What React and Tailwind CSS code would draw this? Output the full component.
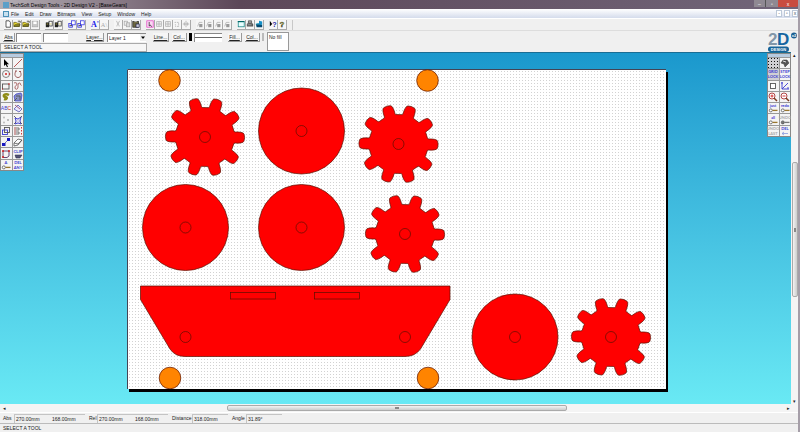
import React, { useState } from 'react';

const INK = '#222';
const BLUE = '#3a3ad0';
const RED = '#d02020';
const GREY = '#a8a8a8';

const menus = ['File', 'Edit', 'Draw', 'Bitmaps', 'View', 'Setup', 'Window', 'Help'];

// Every glyph is drawn in a 10x10 box
const glyphs = {
  page: <path d="M2.5 1h4l1.5 2v6h-5.500z" fill="#fff" stroke={INK} />,
  open: (
    <>
      <path d="M1 8V3h3l1 1h3v4z" fill="#f0e030" stroke="#665c10" />
      <path d="M3 5.500h6L8 8H1z" fill="#8a8420" stroke="#222" strokeWidth=".5" />
      <path d="M6 1.500h3v2" fill="none" stroke={INK} />
    </>
  ),
  save: (
    <>
      <rect x="1.500" y="1.500" width="7" height="7" fill="#c8c8c8" stroke={GREY} />
      <rect x="3" y="2" width="4" height="3" fill="#fff" />
    </>
  ),
  binder: (
    <>
      <rect x="1" y="3" width="4" height="6" fill="#222" />
      <rect x="5" y="1.500" width="4" height="6" fill="#fff" stroke="#222" />
      <path d="M2 5h2M6 5h2" stroke="#d0c040" />
    </>
  ),
  blueDocs: (
    <>
      <rect x="1" y="4.500" width="4.500" height="4.500" fill="#dde" stroke="#2525e0" />
      <rect x="4.500" y="1" width="4.500" height="5" fill="#fff" stroke="#2525e0" />
      <path d="M2 7h3" stroke={INK} />
    </>
  ),
  cut: <path d="M3 1l3 6M7 1L4 7M3 7.500h1M6 7.500h1" fill="none" stroke={GREY} />,
  copy: (
    <>
      <rect x="1.500" y="1.500" width="4" height="5" fill="#eee" stroke={GREY} />
      <rect x="4.500" y="3.500" width="4" height="5" fill="#ddd" stroke={GREY} />
    </>
  ),
  paste: (
    <>
      <rect x="1" y="2" width="7" height="7" fill="#6d6840" stroke={INK} />
      <rect x="5" y="5" width="4" height="4" fill="#ccd" stroke="#224" />
      <path d="M3 2h3" stroke="#ddd" />
    </>
  ),
  select: (
    <>
      <rect x="1" y="1" width="8" height="8" fill="#fbd9f5" stroke="#e040c0" />
      <path d="M4 2.500v5l1.500-1.200L7 8.500" fill="none" stroke={INK} />
    </>
  ),
  grid: <path d="M2 2h6v6H2zM2 5h6M5 2v6" fill="none" stroke={GREY} />,
  rotate: <path d="M2 3h5v5M7 8H3V5" fill="none" stroke={GREY} strokeDasharray="2 1" />,
  move: <path d="M5 1v8M1 5h8M3 3v4M7 3v4" fill="none" stroke={GREY} />,
  order: (
    <>
      <path d="M2 8l2-5h4" fill="none" stroke={GREY} />
      <rect x="4" y="5" width="4" height="4" fill="#999" />
    </>
  ),
  screen: (
    <>
      <rect x="1.500" y="2" width="7.500" height="6.500" fill="#e8ffff" stroke="#0b7c7c" />
      <path d="M1 2h8" stroke="#066" strokeWidth="1.500" />
    </>
  ),
  print: (
    <>
      <path d="M3 1h4v3H3z" fill="#aaa" stroke="#444" />
      <path d="M2 4h6l1 1v3H1V5z" fill="#555" />
      <path d="M2 6h5" stroke="#bbb" />
    </>
  ),
  machine: (
    <>
      <path d="M1 5l3-1 5 2v3H2z" fill="#064a70" />
      <path d="M5 1l4 1v4H5z" fill="#1590c8" />
      <path d="M1 5h4" stroke="#36c8e8" />
    </>
  ),
  pointer: <path d="M3 1v7l1.700-1.600L6 9.300l1-.5-1.200-2.600H8z" fill="#000" />,
  line: <path d="M1 9L9 1" stroke="#b04848" />,
  circle: (
    <>
      <circle cx="5" cy="5" r="3.500" fill="none" stroke="#777" />
      <circle cx="5" cy="5" r="1" fill={RED} />
      <circle cx="8.500" cy="5" r=".8" fill={RED} />
    </>
  ),
  arc: <path d="M3 2C1 5 2 8.500 5 8.500s4-3.500 2-6M2 2h2M6 2.500h2" fill="none" stroke="#965050" />,
  rect: (
    <>
      <rect x="1.500" y="3" width="6.500" height="5" fill="none" stroke="#555" />
      <path d="M7 3h2M1 8h1" stroke={RED} />
    </>
  ),
  curve: <path d="M1 2c1-.5 3-.5 3 1S1.500 5 2 7s3 1.500 3-1 0-4 1.500-4S7 4 8.500 4.500" fill="none" stroke="#a05555" />,
  path: <path d="M8 3C4 1 1 4 4 5c3 0 2 3-1 2" fill="none" stroke="#8f8c18" strokeWidth="2.500" />,
  fill: (
    <>
      <path d="M1 4l2-2 5-1 1 2-1 6-6 0z" fill="#8890c0" stroke={BLUE} strokeWidth=".7" />
      <path d="M3 4h4v4M1 9l3-3" fill="none" stroke="#555" />
    </>
  ),
  dimension: (
    <>
      <path d="M1 6l4-4 4 4-3 3z" fill="#e8e8ff" stroke="#6666b8" />
      <path d="M2 2l5 4" stroke="#a05070" />
    </>
  ),
  points: (
    <>
      <circle cx="3" cy="2.500" r="1" fill="#bbb" />
      <circle cx="7" cy="5" r="1" fill="#aaa" />
      <circle cx="3" cy="7.500" r="1" fill="#bbb" />
    </>
  ),
  edit: (
    <>
      <path d="M2 3l3 1 3-2-1 4 1 3-3-1-3 1 1-3z" fill="#dde" stroke={BLUE} />
      <path d="M1 1l2 2M9 1L7 3M1 9l2-2M9 9L7 7" stroke="#556" />
    </>
  ),
  scale: (
    <>
      <rect x="1.500" y="4" width="5" height="4.500" fill="none" stroke={BLUE} />
      <rect x="3.500" y="1.500" width="5" height="5" fill="none" stroke="#555" />
    </>
  ),
  align: (
    <>
      <path d="M2 1v8" stroke="#a04040" />
      <path d="M3 2h3v2H3M3 6h3v2H3" fill="none" stroke="#666" />
      <path d="M8.500 1v8" stroke={RED} strokeDasharray="1.500 1.500" />
    </>
  ),
  attach: (
    <>
      <rect x="6" y="1" width="3" height="3" fill="#1717c0" />
      <rect x="1" y="6" width="3.500" height="3" fill="#1717c0" />
      <path d="M4 6l2-2" stroke="#66a" />
    </>
  ),
  erase: <path d="M1 6l4-4 4 1-4 5-4 1zM1 6l4 1 4-4" fill="#fff" stroke="#555" strokeWidth=".8" />,
  shape: (
    <>
      <path d="M2 2h6v5L6 8.500H2z" fill="none" stroke="#553366" />
      <path d="M1 2h2M7 2h2M1 8h2" stroke={RED} strokeWidth="1.500" />
    </>
  ),
  clip: (
    <>
      <text x="5" y="4" textAnchor="middle" fontSize="4" fontWeight="bold" fill={BLUE}>CLIP</text>
      <path d="M2 6h7L7 9H3z" fill="#557" stroke="#224" strokeWidth=".5" />
    </>
  ),
  dots: (
    <g fill="#111">
      {[0, 3, 6, 9].map((y) =>
        [0, 3, 6, 9].map((x) => <rect key={`${x}-${y}`} x={x} y={y} width="1" height="1" shapeRendering="crispEdges" />)
      )}
    </g>
  ),
  lock: (
    <>
      <path d="M1 5l2-3h4l2 3-4 4-1-3z" fill="#555" stroke="#333" strokeWidth=".5" />
      <path d="M3 3l3 1" stroke="#eee" />
    </>
  ),
  square: <rect x="2.500" y="2.500" width="5" height="5" fill="#fff" stroke="#555" />,
  axes: (
    <>
      <path d="M2 1v7h7M2 8l6-6" fill="none" stroke={BLUE} />
      <path d="M1 2h2M7 7h2" stroke={BLUE} />
    </>
  ),
};

function zoomGlass(plus) {
  return (
    <>
      <circle cx="4" cy="4" r="3" fill="#fff" stroke="#a83232" />
      <path d="M6 6l3 3" stroke="#7a3a20" strokeWidth="1.500" />
      <path d={plus ? 'M2.500 4h3M4 2.500v3' : 'M2.500 4h3'} stroke={RED} />
    </>
  );
}
glyphs.zoomIn = zoomGlass(true);
glyphs.zoomOut = zoomGlass(false);

function words(top, bottom, color = BLUE) {
  return (
    <g fontSize="4" fontWeight="bold" fontFamily="Lato, sans-serif" fill={color} textAnchor="middle">
      <text x="5" y="4">{top}</text>
      {bottom && <text x="5" y="9">{bottom}</text>}
    </g>
  );
}

function keyed(label, color = BLUE, blob = '#fff') {
  return (
    <>
      {words(label, null, color)}
      <circle cx="2.800" cy="7.400" r="1.500" fill={blob} stroke="#555" strokeWidth=".8" />
      <path d="M4.500 7.400h5" stroke={blob === '#fff' ? '#9a762e' : '#777'} strokeWidth="1.300" />
    </>
  );
}

glyphs.abc = (
  <text x="5" y="7" textAnchor="middle" fontSize="5" fill={BLUE}>
    AB<tspan fill={RED}>C</tspan>
  </text>
);
glyphs.textA = (
  <text x="0" y="9" fontSize="10" fontWeight="bold" fontFamily="Liberation Serif, serif" fill="#1616e8">
    A<tspan fontSize="5" dy="-4">*</tspan>
  </text>
);
glyphs.textGrey = <text x="1" y="9" fontSize="8" fontFamily="Liberation Serif, serif" fill={GREY}>A\</text>;
glyphs.whatsThis = (
  <>
    <path d="M1 1v7l3-3z" fill="#000" />
    <text x="4" y="9" fontSize="9" fontWeight="bold" fill="#2222a0">?</text>
  </>
);
glyphs.help = (
  <text x="2" y="9" fontSize="10" fontWeight="bold" fill="#a8a810" stroke="#333" strokeWidth=".4">?</text>
);
glyphs.gridLock = words('GRID', 'LOCK');
glyphs.stepLock = words('STEP', 'LOCK');
glyphs.delAny = words('DEL', 'ANY');
glyphs.undoLast = words('UNDO', 'LAST', GREY);
glyphs.all = keyed('all');
glyphs.just = keyed('just');
glyphs.redo = keyed('redo');
glyphs.undo = keyed('UNDO', GREY, '#777');
glyphs.del = (
  <>
    {words('DEL')}
    <path d="M2 7.500h6M4 6L2 7.500 4 9" fill="none" stroke="#8899dd" strokeWidth=".8" />
  </>
);
glyphs.attr = keyed('A');

function Glyph({ name, className = 'size-2.5' }) {
  return (
    <svg
      viewBox="0 0 10 10"
      className={`shrink-0 overflow-visible ${className}`}
      strokeWidth="0.9"
      fontFamily="Liberation Sans, sans-serif"
      aria-hidden="true"
    >
      {glyphs[name]}
    </svg>
  );
}

const toolbar = [
  ['page', 'open', 'open', 'save'],
  ['binder', 'binder'],
  ['blueDocs', 'blueDocs'],
  ['textA', 'textGrey'],
  ['cut', 'copy', 'paste'],
  ['select', 'grid', 'grid', 'rotate', 'move'],
  ['order', 'order', 'order', 'order'],
  ['screen', 'print', 'machine'],
  ['whatsThis', 'help'],
];

const drawTools = [
  'pointer', 'line', 'circle', 'arc', 'rect', 'curve', 'path', 'fill', 'abc', 'dimension',
  'points', 'edit', 'scale', 'align', 'attach', 'erase', 'shape', 'clip', 'attr', 'delAny',
];

const viewTools = [
  'dots', 'lock', 'gridLock', 'stepLock', 'square', 'axes', 'zoomIn', 'zoomOut',
  'just', 'redo', 'all', 'undo', 'undoLast', 'del',
];

function ToolPalette({ tools, active, onPick, className, gridClass }) {
  return (
    <div className={`absolute w-6 border border-[#888] bg-[#999] ${className}`}>
      <div className="mb-px h-[3px] bg-[#b7cbe0]" />
      <div className={`grid grid-cols-2 gap-px ${gridClass}`}>
        {tools.map((name) => (
          <button
            key={name}
            type="button"
            aria-label={name}
            onClick={() => onPick(name)}
            className={`flex items-center justify-center ${active.includes(name) ? 'bg-[#d0d0d4]' : 'bg-[#f4f4f4]'}`}
          >
            <Glyph name={name} />
          </button>
        ))}
      </div>
    </div>
  );
}

// Outline of a ten tooth gear centred on the origin
function gearPath() {
  const profile = [
    [29.6, -11.5], [30.8, -10.4], [33.5, -9.6], [36.2, -8.4], [38.4, -6.8], [39.2, -5],
    [39.6, 0], [39.2, 5], [38.4, 6.8], [36.2, 8.4], [33.5, 9.6], [30.8, 10.4], [29.6, 11.5],
  ];
  const pts = [];
  for (let tooth = 0; tooth < 10; tooth++) {
    profile.forEach(([r, deg]) => {
      const a = ((tooth * 36 + deg) * Math.PI) / 180;
      pts.push(`${(r * Math.cos(a)).toFixed(2)} ${(r * Math.sin(a)).toFixed(2)}`);
    });
  }
  return `M${pts.join('L')}Z`;
}

const gear = gearPath();
const gears = [[78, 68], [271.5, 75], [278, 165], [484, 268]];
const discs = [[174.5, 62], [58.5, 158.5], [174.5, 158.5], [388, 268]];
const pins = [[42.5, 11.5], [300.5, 11.5], [43, 309], [301, 309]];

function Drawing() {
  return (
    <svg
      viewBox="0 0 539 320"
      className="h-80 w-[539px] shrink-0 bg-white shadow-[2px_3px_0_#000]"
      role="img"
      aria-label="Base and gears"
    >
      <defs>
        <pattern id="dots" width="3" height="3" patternUnits="userSpaceOnUse">
          <rect x="2" y="2" width="1" height="1" fill="#d2d2d2" />
        </pattern>
      </defs>
      <rect width="539" height="320" fill="url(#dots)" />
      <path d="M.5 320V.5H539" fill="none" stroke="#445" />
      <g stroke="#5a1000" strokeWidth="0.7">
        <g fill="#ff8400">
          {pins.map(([x, y]) => <circle key={`${x}-${y}`} cx={x} cy={y} r="10.800" />)}
        </g>
        <g fill="#ff0000">
          {discs.map(([x, y]) => (
            <g key={`${x}-${y}`}>
              <circle cx={x} cy={y} r="43" />
              <circle cx={x} cy={y} r="5.500" />
            </g>
          ))}
          {gears.map(([x, y]) => (
            <g key={`${x}-${y}`} transform={`translate(${x} ${y}) rotate(1)`}>
              <path d={gear} />
              <circle r="5.500" />
            </g>
          ))}
          <path d="M13.500 217H323V230.500L293.500 280Q288 287.500 278 287.500H58Q48 287.500 43 280L13.500 230.500Z" />
          <rect x="103.500" y="223.500" width="45" height="6.500" />
          <rect x="187.500" y="223.500" width="45" height="6.500" />
          <circle cx="58.500" cy="268" r="5.500" />
          <circle cx="278" cy="268" r="5.500" />
        </g>
      </g>
    </svg>
  );
}

function SmallButton({ children, className }) {
  return (
    <button
      type="button"
      className={`h-[9px] border-r border-b border-[#999] bg-[#f6f6f6] text-center leading-[8px] underline ${className}`}
    >
      {children}
    </button>
  );
}

function Logo() {
  return (
    <svg
      viewBox="0 0 32 21"
      className="ml-auto h-[21px] w-8 shrink-0 overflow-visible"
      fontFamily="Liberation Sans, sans-serif"
      fontWeight="bold"
      role="img"
      aria-label="2D Design"
    >
      <text x="2" y="14" fontSize="17" fill="#8296a8">2</text>
      <text x="11" y="14" fontSize="17" fill="#1565a0">D</text>
      <circle cx="28" cy="4.500" r="3" fill="#1c5f92" />
      <text x="28" y="6" fontSize="4" textAnchor="middle" fill="#fff">v2</text>
      <rect x="2" y="15.500" width="21" height="5.500" rx="2.700" fill="#17649a" />
      <text x="12.500" y="19.800" fontSize="4" textAnchor="middle" fill="#fff">DESIGN</text>
    </svg>
  );
}

function Readout({ label, values, labelClass, boxClass }) {
  return (
    <div className="flex items-center">
      <span className={labelClass}>{label}</span>
      <div className={`flex h-[9px] items-center border-t border-l border-[#c4c4c4] pl-px ${boxClass}`}>
        {values.map((value, i) => <span key={i} className="w-9 shrink-0">{value}</span>)}
      </div>
    </div>
  );
}

function App() {
  const [tool, setTool] = useState('');
  const [layer, setLayer] = useState('Layer 1');

  return (
    <div className="flex h-screen flex-col overflow-hidden border-r-2 border-[#a59ea8] bg-[#f0f0f0] font-['Liberation_Sans',sans-serif] text-[5px] leading-[8px] text-[#222]">
      <header className="flex h-[9px] shrink-0 items-center bg-linear-to-r from-[#b4aeb4] via-[#5c4758] via-30% to-[#72667a] pl-[3px]">
        <span className="size-1.5 bg-[#5c9fc8]" />
        <h1 className="ml-px text-black">TechSoft Design Tools - 2D Design V2 - [BaseGears]</h1>
        <div className="ml-auto flex h-[7px] self-start leading-[6px] text-white">
          <button type="button" aria-label="Minimise" className="w-3 border-r border-[#555] bg-[#8f8992]">–</button>
          <button type="button" aria-label="Restore" className="w-3 bg-[#8f8992]">▫</button>
          <button type="button" aria-label="Close" className="w-5 rounded-br-xs bg-[#c94c40]">x</button>
        </div>
      </header>

      <nav className="flex h-[9px] shrink-0 items-center gap-1.5 bg-linear-to-b from-white to-[#d5dcec] pl-[3px]">
        <span className="-mr-1 size-1.5 border border-[#4a90b8] bg-[#c8e0f0]" />
        {menus.map((item) => <button key={item} type="button">{item}</button>)}
        <div className="ml-auto flex gap-0.5 text-[#456]">
          <button type="button" aria-label="Minimise drawing" className="h-[7px] w-1.5 border border-[#bcc8d8] bg-white leading-[5px]">-</button>
          <button type="button" aria-label="Restore drawing" className="h-[7px] w-1.5 border border-[#bcc8d8] bg-white leading-[5px]">▫</button>
          <button type="button" aria-label="Close drawing" className="h-[7px] w-1.5 border border-[#bcc8d8] bg-white leading-[5px]">x</button>
        </div>
      </nav>

      <div className="flex h-3 shrink-0 items-center gap-[5px] border-t border-white pl-1">
        {toolbar.map((group, g) => (
          <div key={g} className="flex">
            {group.map((name, i) => (
              <button
                key={i}
                type="button"
                aria-label={name}
                className="flex h-2.5 w-[9px] items-center justify-center border-r border-b border-[#aaa] bg-[#f6f6f6]"
              >
                <Glyph name={name} className="size-2" />
              </button>
            ))}
          </div>
        ))}
        <div className="h-2.5 w-px bg-[#c8c8c8]" />
      </div>

      <div className="flex h-[22px] shrink-0 border-t border-[#ddd]">
        <div>
          <div className="flex h-3 items-center pl-[3px]">
            <SmallButton className="w-3">Abs</SmallButton>
            <input aria-label="Absolute x" className="ml-px h-[9px] w-[25px] border-t border-l border-[#888] bg-white" />
            <input aria-label="Absolute y" className="ml-0.5 h-[9px] w-[25px] border-t border-l border-[#888] bg-white" />
            <SmallButton className="ml-[18px] w-[18px]">Layer...</SmallButton>
            <div className="relative ml-[3px] h-[9px] w-[39px]">
              <select
                aria-label="Layer"
                value={layer}
                onChange={(e) => setLayer(e.target.value)}
                className="block h-[9px] w-full appearance-none border-t border-l border-[#888] bg-white pl-px leading-[8px]"
              >
                <option>Layer 1</option>
              </select>
              <svg viewBox="0 0 6 7" className="pointer-events-none absolute top-px right-0 h-[7px] w-1.5 bg-[#eee]" aria-hidden="true">
                <path d="M1 2.500h4L3 5z" fill="#000" />
              </svg>
            </div>
          </div>
          <div className="h-[9px] w-[147px] border border-[#aaa] bg-[#f6f6f6] pl-[3px] leading-[7px]">SELECT A TOOL</div>
        </div>
        <div className="flex h-3 items-center pl-1.5">
          <SmallButton className="w-4">Line...</SmallButton>
          <SmallButton className="ml-[3px] w-[15px]">Col...</SmallButton>
          <div className="ml-0.5 h-2 w-[3px] bg-black" />
          <div className="ml-0.5 flex h-[9px] w-7 items-center border-t border-l border-[#888] bg-white">
            <div className="h-px w-full bg-[#666]" />
          </div>
          <SmallButton className="ml-1.5 w-[14px]">Fill...</SmallButton>
          <SmallButton className="ml-[3px] w-[15px]">Col...</SmallButton>
          <div className="ml-0.5 h-2 w-0.5 bg-[#bbb]" />
        </div>
        <div className="mt-px ml-[3px] h-[19px] w-[22px] border border-[#999] bg-white pl-px">No fill</div>
        <Logo />
      </div>

      <div className="flex min-h-0 flex-1">
        <main className="relative flex min-w-0 flex-1 items-start overflow-hidden border-t border-[#1a6d94] bg-linear-to-b from-[#1a98cd] to-[#69e9f4] pt-4 pl-[127px]">
          <Drawing />
          <ToolPalette tools={drawTools} active={[tool]} onPick={setTool} className="top-0 left-0" gridClass="h-[112px]" />
          <ToolPalette
            tools={viewTools}
            active={['dots', 'gridLock', tool]}
            onPick={setTool}
            className="top-0 right-0"
            gridClass="h-[78px]"
          />
        </main>
        <div className="flex w-[7px] shrink-0 flex-col items-center bg-[#f4f4f4] leading-[6px]">
          <span>▴</span>
          <div className="mt-[104px] flex h-[135px] w-1.5 items-center justify-center rounded-xs border border-[#aaa] bg-linear-to-r from-[#f4f4f4] to-[#ccc]">
            <div className="h-1 w-0.5 bg-[#888]" />
          </div>
          <span className="mt-auto">▾</span>
        </div>
      </div>

      <div className="flex h-2 shrink-0 items-center justify-between bg-[#f4f4f4] pr-2 pl-[3px] leading-[6px]">
        <span>◂</span>
        <div className="flex h-1.5 w-[340px] items-center justify-center rounded-xs border border-[#aaa] bg-linear-to-b from-[#f4f4f4] to-[#ccc]">
          <div className="h-0.5 w-1 bg-[#888]" />
        </div>
        <span>▸</span>
      </div>

      <div className="flex h-[11px] shrink-0 items-center gap-1 border-t border-white pl-[3px]">
        <Readout label="Abs" values={['270.00mm', '168.00mm']} labelClass="w-[11px]" boxClass="w-[71px]" />
        <Readout label="Rel" values={['270.00mm', '168.00mm']} labelClass="w-2" boxClass="w-[71px]" />
        <Readout label="Distance" values={['318.00mm']} labelClass="w-5" boxClass="w-9" />
        <Readout label="Angle" values={['31.89°']} labelClass="w-[14px]" boxClass="w-9" />
      </div>

      <footer className="h-[9px] shrink-0 border-t border-[#bbb] pl-[3px]">SELECT A TOOL</footer>
    </div>
  );
}

export default App;
